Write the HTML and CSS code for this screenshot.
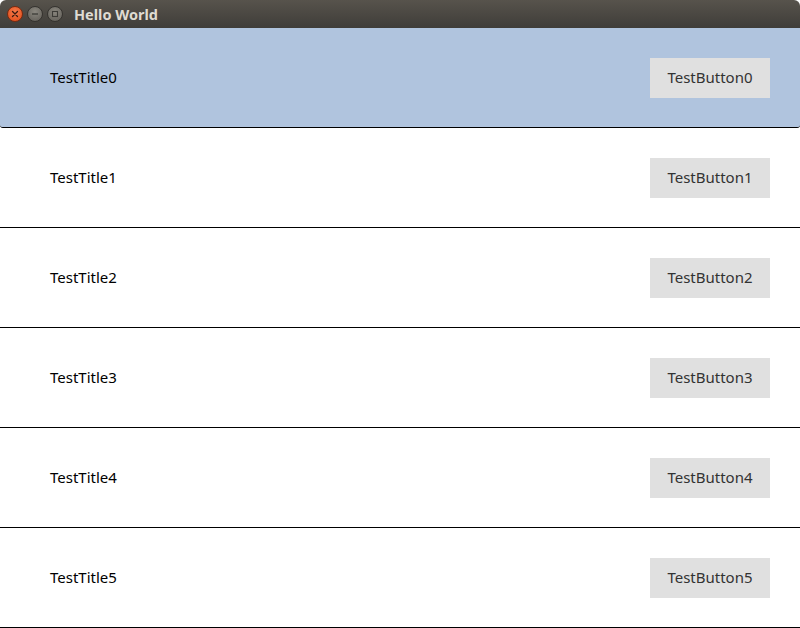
FILE: index.html
```html
<!DOCTYPE html>
<html>
<head>
<meta charset="utf-8">
<link rel="stylesheet" href="styles.css">
</head>
<body>
<div class="window">
  <div class="titlebar">
    <div class="controls">
      <span class="ctl close"><svg width="8" height="8" viewBox="0 0 8 8"><path d="M1.5 1.5L6.5 6.5M6.5 1.5L1.5 6.5" stroke="#3a1a10" stroke-width="1.3" stroke-linecap="round"/></svg></span>
      <span class="ctl"><svg width="8" height="8" viewBox="0 0 8 8"><path d="M1 4H7" stroke="#3c3b37" stroke-width="1.3"/></svg></span>
      <span class="ctl"><svg width="8" height="8" viewBox="0 0 8 8"><rect x="1.5" y="1.5" width="5" height="5" fill="none" stroke="#3c3b37" stroke-width="1.1"/></svg></span>
    </div>
    <div class="title">Hello World</div>
  </div>
  <div class="list">
    <div class="row selected"><span class="label">TestTitle0</span><span class="btn">TestButton0</span></div>
    <div class="row"><span class="label">TestTitle1</span><span class="btn">TestButton1</span></div>
    <div class="row"><span class="label">TestTitle2</span><span class="btn">TestButton2</span></div>
    <div class="row"><span class="label">TestTitle3</span><span class="btn">TestButton3</span></div>
    <div class="row"><span class="label">TestTitle4</span><span class="btn">TestButton4</span></div>
    <div class="row"><span class="label">TestTitle5</span><span class="btn">TestButton5</span></div>
  </div>
</div>
</body>
</html>
```
FILE: styles.css
```css
html, body {
  margin: 0;
  padding: 0;
  background: #ffffff;
}
body {
  font-family: "Noto Sans", "DejaVu Sans", sans-serif;
  width: 800px;
  height: 628px;
  overflow: hidden;
}
.window {
  display: flex;
  flex-direction: column;
}
.titlebar {
  height: 28px;
  background: linear-gradient(#57534c, #3f3d39);
  border-radius: 6px 6px 0 0;
  display: flex;
  align-items: center;
  box-sizing: border-box;
}
.controls {
  display: flex;
  gap: 4px;
  padding-left: 7px;
}
.ctl {
  width: 16px;
  height: 16px;
  border-radius: 50%;
  background: radial-gradient(circle at 50% 35%, #8a877f, #5e5b55);
  border: 1px solid #35332f;
  box-sizing: border-box;
  display: flex;
  align-items: center;
  justify-content: center;
}
.ctl.close {
  background: radial-gradient(circle at 50% 35%, #f5794a, #df4a16);
  border-color: #7a2a10;
}
.title {
  margin-left: 11px;
  color: #dfdbd2;
  font-weight: bold;
  font-size: 14.5px;
}
.list {
  display: flex;
  flex-direction: column;
}
.row {
  height: 100px;
  box-sizing: border-box;
  border-bottom: 1px solid #000;
  display: flex;
  align-items: center;
  justify-content: space-between;
  padding: 0 30px 0 50px;
}
.row.selected {
  background: #b0c4de;
  border-radius: 0 0 3px 3px;
}
.label {
  font-size: 15px;
  color: #000;
  padding-bottom: 2px;
}
.btn {
  width: 120px;
  height: 40px;
  box-sizing: border-box;
  padding-bottom: 2px;
  background: #e0e0e0;
  color: #333;
  font-size: 15px;
  display: flex;
  align-items: center;
  justify-content: center;
}
```
